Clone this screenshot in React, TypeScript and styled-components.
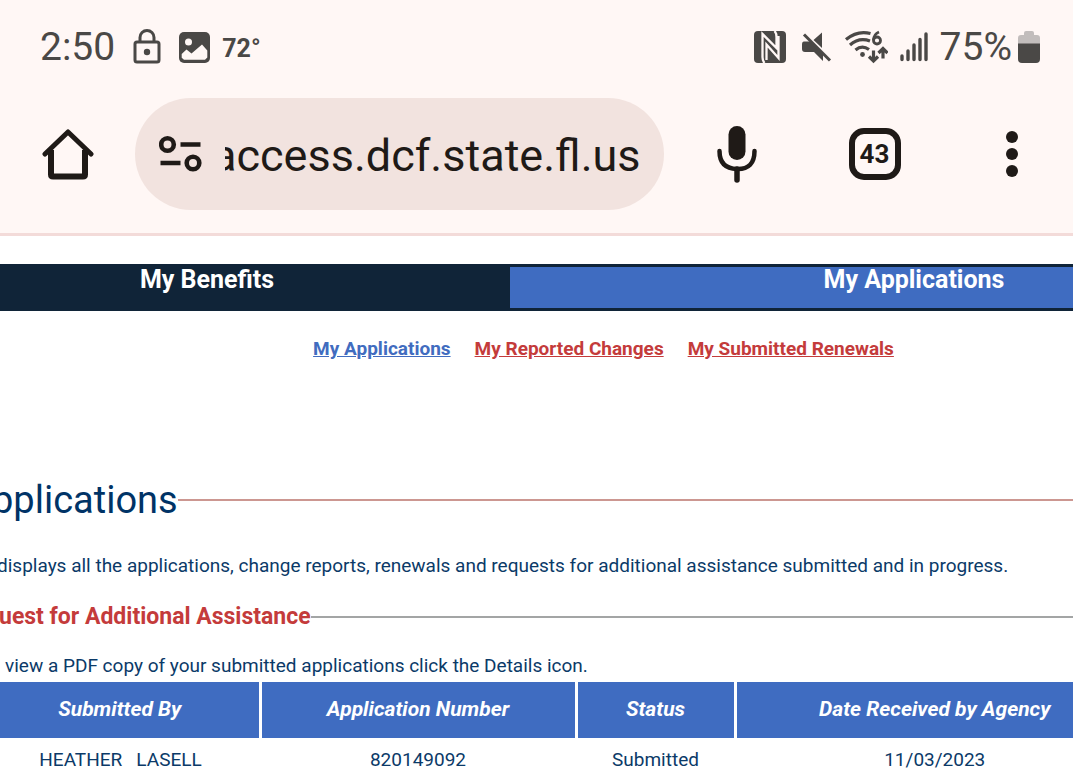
import React from 'react';
import styled, { createGlobalStyle } from 'styled-components';

const GlobalStyle = createGlobalStyle`
  * { box-sizing: border-box; }
  body {
    margin: 0;
    background: #fff;
    font-family: Roboto, "Liberation Sans", sans-serif;
    color: #0b3a68;
  }
  h1, h2, p { margin: 0; font-weight: 400; }
`;

const Screen = styled.div`
  min-height: 100vh;
  overflow: hidden;
`;

const BrowserChrome = styled.header`
  background: #fff7f5;
  border-bottom: 3px solid #f3dbd9;
`;

const StatusBar = styled.div`
  display: flex;
  align-items: center;
  justify-content: space-between;
  height: 94px;
  padding: 0 33px 0 40px;
  color: #4a4846;
`;

const StatusGroup = styled.div<{ $gap: number }>`
  display: flex;
  align-items: center;
  gap: ${(p) => p.$gap}px;
`;

const StatusText = styled.span`
  font-size: 39px;
  line-height: 48px;
  font-weight: 400;
`;

const Temperature = styled.span`
  margin-left: -6px;
  padding-top: 4px;
  font-size: 25px;
  line-height: 30px;
  font-weight: 700;
`;

const Toolbar = styled.div`
  display: flex;
  align-items: center;
  padding: 4px 33px 23px 40px;
  color: #1f1a17;
`;

const IconButton = styled.button`
  display: flex;
  align-items: center;
  justify-content: center;
  flex: none;
  width: 56px;
  height: 60px;
  padding: 0;
  border: 0;
  background: none;
  color: inherit;
`;

const AddressBar = styled.label`
  display: flex;
  align-items: center;
  flex: 1;
  min-width: 0;
  height: 112px;
  margin: 0 45px 0 39px;
  padding: 0 20px 0 24px;
  gap: 23px;
  border-radius: 56px;
  background: #f2e3df;
`;

const AddressInput = styled.input`
  flex: 1;
  min-width: 0;
  padding: 3px 0 0;
  border: 0;
  outline: 0;
  background: none;
  color: inherit;
  font-family: inherit;
  font-size: 45px;
  line-height: 56px;
  text-indent: -13px;
`;

const ToolbarActions = styled.div`
  display: flex;
  align-items: center;
  justify-content: space-between;
  flex: 0 0 331px;
`;

const TabCount = styled.span`
  display: flex;
  align-items: center;
  justify-content: center;
  width: 52px;
  height: 52px;
  border: 6px solid currentColor;
  border-radius: 15px;
  font-family: Roboto, sans-serif;
  font-size: 26px;
  line-height: 30px;
  font-weight: 700;
`;

const SiteTabs = styled.nav`
  display: flex;
  height: 47px;
  margin: 28px -245px 0 -96px;
  padding: 3px 0;
  background: #102438;
`;

const SiteTab = styled.a<{ $grow: number; $active?: boolean }>`
  flex: ${(p) => p.$grow} 0 0;
  background: ${(p) => (p.$active ? '#3f6cc1' : 'transparent')};
  color: #fff;
  font-size: 25px;
  line-height: 26px;
  font-weight: 700;
  text-align: center;
  text-decoration: none;
`;

const SubNav = styled.nav`
  display: flex;
  justify-content: center;
  gap: 24px;
  margin-top: 26px;
  padding-left: 134px;
`;

const SubLink = styled.a<{ $current?: boolean }>`
  color: ${(p) => (p.$current ? '#416cbf' : '#c43b3b')};
  font-size: 19px;
  line-height: 24px;
  font-weight: 700;
  text-decoration: underline;
`;

const TitleRow = styled.div<{ $line: string }>`
  display: flex;
  align-items: center;

  &::after {
    content: '';
    flex: 1;
    height: 2px;
    background: ${(p) => p.$line};
  }
`;

const PageTitle = styled.h1`
  margin-left: -8px;
  color: #003366;
  font-size: 38px;
  line-height: 48px;
`;

const SectionTitle = styled.h2`
  margin-left: -1px;
  color: #c43b3b;
  font-size: 23px;
  line-height: 28px;
  font-weight: 700;
`;

const Main = styled.main`
  padding-top: 115px;
`;

const Intro = styled.p`
  margin: 30px 0 25px -3px;
  font-size: 19px;
  line-height: 24px;
  white-space: nowrap;
`;

const Hint = styled.p`
  margin: 23px 0 4px 5px;
  font-size: 19px;
  line-height: 24px;
`;

const Applications = styled.table`
  width: calc(100% + 82px);
  margin: 0 -63px 0 -19px;
  border-collapse: collapse;
  table-layout: fixed;
`;

const HeadCell = styled.th<{ $width?: number }>`
  width: ${(p) => (p.$width ? `${p.$width}px` : 'auto')};
  height: 56px;
  padding: 0 0 2px;
  border-right: 3px solid #fff;
  background: #3f6cc1;
  color: #fff;
  font-size: 21px;
  line-height: 26px;
  font-style: italic;
  font-weight: 700;
`;

const Cell = styled.td`
  height: 44px;
  padding: 0;
  font-size: 19px;
  line-height: 24px;
  text-align: center;
  white-space: pre;
`;

const LockIcon = () => (
  <svg width="28" height="36" viewBox="0 0 28 36" fill="none" stroke="currentColor" strokeWidth="3">
    <rect x="2" y="13" width="24" height="20" rx="2" />
    <path d="M7 13V8.500a7 7 0 0 1 14 0V13" />
    <circle cx="14" cy="23" r="3.200" fill="currentColor" stroke="none" />
  </svg>
);

const PictureIcon = () => (
  <svg width="31" height="31" viewBox="0 0 31 31">
    <rect width="31" height="31" rx="5" fill="currentColor" />
    <circle cx="9.500" cy="10" r="3.500" fill="#fff7f5" />
    <path d="M2.700 22l4.800-4.500 5 4L23 12.500l5.300 6v7l-2.300 2.200H5l-2.300-2z" fill="#fff7f5" />
  </svg>
);

const NfcIcon = () => (
  <svg width="32" height="32" viewBox="0 0 32 32">
    <rect width="32" height="32" rx="4" fill="currentColor" />
    <path
      d="M10.500 32Q8.500 30 8.500 26V3L22.500 17V6Q22.500 2 20.500 0M12.500 29V13.500L24.500 27V5"
      fill="none"
      stroke="#fff7f5"
      strokeWidth="2.300"
    />
  </svg>
);

const MuteIcon = () => (
  <svg width="34" height="30" viewBox="-3 0 34 30" fill="currentColor">
    <path d="M3 9.500h6.500L22 22v7l-9-9H4q-3 0-3-3v-4.500q0-3 2-3zM12.500 8L21 .500V16z" />
    <path d="M3 2.500l26 26" stroke="currentColor" strokeWidth="3" />
  </svg>
);

const WifiIcon = () => (
  <svg width="44" height="34" viewBox="-1 0 44 34" fill="none" stroke="currentColor" strokeWidth="3.200">
    <path d="M1 9.500Q12.500 0 25.500 3.500M5 15Q14 7 25 11M10.500 20Q17 14.500 24 19.500" />
    <circle cx="17.500" cy="24.500" r="2.400" fill="currentColor" stroke="none" />
    <path d="M34 2q-5 2-5.500 8" strokeWidth="2.800" />
    <circle cx="32" cy="10.500" r="3.500" strokeWidth="2.800" />
    <path d="M28.500 20.500v10.500M24 26.500l4.500 4.500 4.500-4.500M38 28.500V18.500M33.500 23l4.500-4.500 4.500 4.500" />
  </svg>
);

const SignalIcon = () => (
  <svg width="28" height="30" viewBox="0 0 28 30" stroke="currentColor" strokeWidth="3.400" strokeLinecap="round">
    <path d="M2 24v3.500M8 19v8.500M14 13v14.500M20 7.500v20M26 2v25.500" />
  </svg>
);

const BatteryIcon = () => (
  <svg width="22" height="32" viewBox="0 0 22 32" fill="currentColor">
    <path d="M0 13V7q0-3 3-3h3V2q0-2 2-2h6q2 0 2 2v2h3q3 0 3 3v6z" fill="#c2bdbc" />
    <path d="M0 12.500h22V28q0 4-4 4H4q-4 0-4-4z" />
  </svg>
);

const HomeIcon = () => (
  <svg width="52" height="52" viewBox="0 0 52 52" fill="none" stroke="currentColor" strokeWidth="6">
    <path d="M9 22v24.500q0 2 2 2h30q2 0 2-2V22" />
    <path d="M3 26L26 4l23 22" strokeLinecap="round" strokeLinejoin="round" strokeWidth="5" />
  </svg>
);

const SiteInfoIcon = () => (
  <svg width="43" height="38" viewBox="0 0 43 38" fill="none" stroke="currentColor" strokeWidth="4.600">
    <circle cx="8.500" cy="9.500" r="6.300" />
    <circle cx="34" cy="28" r="6.300" />
    <path d="M21.500 9.500h20M1.500 28h20" />
  </svg>
);

const MicIcon = () => (
  <svg width="42" height="58" viewBox="0 0 42 58" fill="none" stroke="currentColor" strokeLinecap="round">
    <rect x="12.500" y="1" width="17" height="34" rx="8.500" fill="currentColor" stroke="none" />
    <path d="M3.500 26q0 17.500 17.500 18t17.500-18" strokeWidth="4.500" />
    <path d="M21 44v11" strokeWidth="5.500" />
  </svg>
);

const MoreIcon = () => (
  <svg width="12" height="46" viewBox="0 0 12 46" fill="currentColor">
    <circle cx="6" cy="6" r="6" />
    <circle cx="6" cy="23" r="6" />
    <circle cx="6" cy="40" r="6" />
  </svg>
);

const columns = [
  { title: 'Submitted By', width: 279 },
  { title: 'Application Number', width: 316 },
  { title: 'Status', width: 159 },
  { title: 'Date Received by Agency' },
];

const rows = [['HEATHER   LASELL', '820149092', 'Submitted', '11/03/2023']];

export default function App() {
  return (
    <Screen>
      <GlobalStyle />
      <BrowserChrome>
        <StatusBar>
          <StatusGroup $gap={18}>
            <StatusText>2:50</StatusText>
            <LockIcon />
            <PictureIcon />
            <Temperature>72°</Temperature>
          </StatusGroup>
          <StatusGroup $gap={12}>
            <NfcIcon />
            <MuteIcon />
            <WifiIcon />
            <SignalIcon />
            <StatusGroup $gap={6}>
              <StatusText>75%</StatusText>
              <BatteryIcon />
            </StatusGroup>
          </StatusGroup>
        </StatusBar>
        <Toolbar>
          <IconButton aria-label="Home">
            <HomeIcon />
          </IconButton>
          <AddressBar>
            <SiteInfoIcon />
            <AddressInput aria-label="Address" defaultValue="access.dcf.state.fl.us" />
          </AddressBar>
          <ToolbarActions>
            <IconButton aria-label="Voice search">
              <MicIcon />
            </IconButton>
            <IconButton aria-label="Open tabs">
              <TabCount>43</TabCount>
            </IconButton>
            <IconButton aria-label="More options">
              <MoreIcon />
            </IconButton>
          </ToolbarActions>
        </Toolbar>
      </BrowserChrome>

      <SiteTabs>
        <SiteTab href="#benefits" $grow={3}>My Benefits</SiteTab>
        <SiteTab href="#applications" $grow={4} $active>My Applications</SiteTab>
      </SiteTabs>
      <SubNav>
        <SubLink href="#applications" $current>My Applications</SubLink>
        <SubLink href="#changes">My Reported Changes</SubLink>
        <SubLink href="#renewals">My Submitted Renewals</SubLink>
      </SubNav>

      <Main>
        <TitleRow $line="#cc9791">
          <PageTitle>pplications</PageTitle>
        </TitleRow>
        <Intro>
          displays all the applications, change reports, renewals and requests for additional
          assistance submitted and in progress.
        </Intro>
        <TitleRow $line="#a3a5a5">
          <SectionTitle>uest for Additional Assistance</SectionTitle>
        </TitleRow>
        <Hint>view a PDF copy of your submitted applications click the Details icon.</Hint>
        <Applications>
          <thead>
            <tr>
              {columns.map((c) => (
                <HeadCell key={c.title} $width={c.width}>{c.title}</HeadCell>
              ))}
            </tr>
          </thead>
          <tbody>
            {rows.map((row) => (
              <tr key={row[1]}>
                {row.map((value) => (
                  <Cell key={value}>{value}</Cell>
                ))}
              </tr>
            ))}
          </tbody>
        </Applications>
      </Main>
    </Screen>
  );
}
